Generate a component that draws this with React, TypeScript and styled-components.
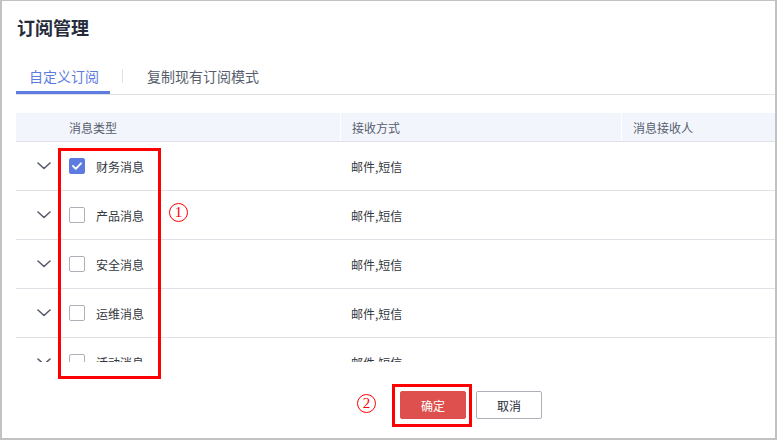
import React from "react";
import styled, { createGlobalStyle } from "styled-components";

const Global = createGlobalStyle`
  html, body { margin: 0; padding: 0; background: #fff; }
  body { font-family: "Noto Sans CJK SC", "Noto Sans", sans-serif; }
  * { box-sizing: border-box; }
`;

const Frame = styled.div`
  position: relative;
  width: 777px;
  height: 440px;
  border-style: solid;
  border-color: #c2c2c2;
  border-width: 1px 2px 2px 2px;
  background: #fff;
  display: flex;
  flex-direction: column;
  overflow: hidden;
`;

const Title = styled.h1`
  margin: 0;
  padding: 14px 0 0 15px;
  font-size: 18px;
  line-height: 24px;
  font-weight: 700;
  color: #252b3a;
`;

const TabList = styled.div`
  margin: 18px 0 0 14px;
  display: flex;
  align-items: center;
  border-bottom: 1px solid #dfe1e6;
  height: 38px;
`;

const Tab = styled.div<{ $active?: boolean }>`
  height: 37px;
  display: flex;
  align-items: center;
  padding: 3px ${(p) => (p.$active ? "11px" : "12px")} 0 13px;
  font-size: 14px;
  color: ${(p) => (p.$active ? "#5e7ce0" : "#575d6c")};
  border-bottom: 3px solid ${(p) => (p.$active ? "#5e7ce0" : "transparent")};
`;

const TabSep = styled.div`
  width: 1px;
  height: 14px;
  background: #dfe1e6;
  margin: 0 11px 0 12px;
`;

const Table = styled.div`
  margin: 18px 0 0 14px;
  display: flex;
  flex-direction: column;
`;

const cols = "53px 271px 281px 1fr";

const HeadRow = styled.div`
  display: grid;
  grid-template-columns: ${cols};
  height: 29px;
  background: #f2f5fc;
  border-bottom: 1px solid #dfe1e6;
`;

const HeadCell = styled.div<{ $sep?: boolean }>`
  display: flex;
  align-items: center;
  font-size: 12px;
  color: #575d6c;
  padding-left: ${(p) => (p.$sep ? "11px" : "0")};
  border-left: ${(p) => (p.$sep ? "1px solid #fff" : "none")};
`;

const Body = styled.div`
  height: 220px;
  overflow: hidden;
`;

const Row = styled.div`
  display: grid;
  grid-template-columns: ${cols};
  height: 49px;
  border-bottom: 1px solid #dfe1e6;
`;

const Cell = styled.div<{ $pad?: boolean }>`
  display: flex;
  align-items: center;
  font-size: 12px;
  color: #333840;
  padding-left: ${(p) => (p.$pad ? "11px" : "0")};
`;

const ExpandCell = styled.div`
  display: flex;
  align-items: center;
  justify-content: center;
  padding-left: 2px;
`;

const Check = styled.span<{ $checked?: boolean }>`
  width: 16px;
  height: 16px;
  border-radius: 2px;
  margin-right: 11px;
  display: inline-flex;
  align-items: center;
  justify-content: center;
  background: ${(p) => (p.$checked ? "#5e7ce0" : "#fff")};
  border: 1px solid ${(p) => (p.$checked ? "#5e7ce0" : "#adb0b8")};
`;

const Footer = styled.div`
  flex: 1;
  display: flex;
  align-items: flex-start;
  padding: 29px 0 0 398px;
  gap: 10px;
`;

const Button = styled.button<{ $primary?: boolean }>`
  width: 66px;
  height: 28px;
  border-radius: 2px;
  font-family: "Noto Sans CJK SC", sans-serif;
  font-size: 12px;
  cursor: pointer;
  background: ${(p) => (p.$primary ? "#de504e" : "#fff")};
  color: ${(p) => (p.$primary ? "#fff" : "#252b3a")};
  border: 1px solid ${(p) => (p.$primary ? "#de504e" : "#adb0b8")};
`;

const Mark = styled.div<{ $l: number; $t: number; $w: number; $h: number }>`
  position: absolute;
  left: ${(p) => p.$l}px;
  top: ${(p) => p.$t}px;
  width: ${(p) => p.$w}px;
  height: ${(p) => p.$h}px;
  border: 3px solid #ff0000;
  pointer-events: none;
`;

const Num = styled.div<{ $l: number; $t: number }>`
  position: absolute;
  left: ${(p) => p.$l}px;
  top: ${(p) => p.$t}px;
  width: 19px;
  height: 19px;
  border: 1px solid #ff0000;
  border-radius: 50%;
  color: #ff0000;
  font-family: "Liberation Serif", serif;
  font-size: 15px;
  line-height: 17px;
  text-align: center;
`;

const Chevron = () => (
  <svg width="14" height="8" viewBox="0 0 14 8" fill="none">
    <path d="M1 1l6 5.5L13 1" stroke="#575d6c" strokeWidth="1.6" strokeLinecap="round" strokeLinejoin="round" />
  </svg>
);

const Tick = () => (
  <svg width="10" height="8" viewBox="0 0 10 8" fill="none">
    <path d="M1 4l2.8 2.8L9 1.3" stroke="#fff" strokeWidth="1.8" strokeLinecap="round" strokeLinejoin="round" />
  </svg>
);

const rows = [
  { name: "财务消息", checked: true },
  { name: "产品消息" },
  { name: "安全消息" },
  { name: "运维消息" },
  { name: "活动消息" },
];

export default function App() {
  return (
    <>
      <Global />
      <Frame>
        <Title>订阅管理</Title>
        <TabList>
          <Tab $active>自定义订阅</Tab>
          <TabSep />
          <Tab>复制现有订阅模式</Tab>
        </TabList>
        <Table>
          <HeadRow>
            <HeadCell />
            <HeadCell>消息类型</HeadCell>
            <HeadCell $sep>接收方式</HeadCell>
            <HeadCell $sep>消息接收人</HeadCell>
          </HeadRow>
          <Body>
            {rows.map((r) => (
              <Row key={r.name}>
                <ExpandCell>
                  <Chevron />
                </ExpandCell>
                <Cell>
                  <Check $checked={r.checked}>{r.checked && <Tick />}</Check>
                  {r.name}
                </Cell>
                <Cell $pad>邮件,短信</Cell>
                <Cell $pad />
              </Row>
            ))}
          </Body>
        </Table>
        <Footer>
          <Button $primary>确定</Button>
          <Button>取消</Button>
        </Footer>
        <Mark $l={56} $t={147} $w={103} $h={231} />
        <Num $l={167} $t={202}>1</Num>
        <Mark $l={390} $t={383} $w={80} $h={43} />
        <Num $l={355} $t={393}>2</Num>
      </Frame>
    </>
  );
}
